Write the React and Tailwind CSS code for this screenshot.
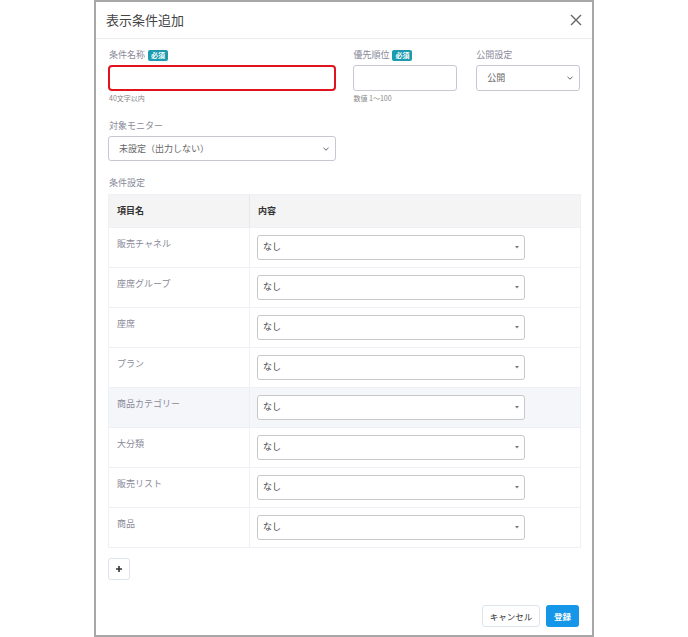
import React from "react";

const rows = [
  { name: "販売チャネル" },
  { name: "座席グループ" },
  { name: "座席" },
  { name: "プラン" },
  { name: "商品カテゴリー", hl: true },
  { name: "大分類" },
  { name: "販売リスト" },
  { name: "商品" },
];

function Badge() {
  return (
    <span className="ml-[3px] inline-flex h-[11px] items-center rounded-[2px] bg-[#1c9bb0] px-[3px] text-[7px] font-bold leading-none text-white">
      必須
    </span>
  );
}

function Chevron() {
  return (
    <svg width="8" height="6" viewBox="0 0 8 6" className="text-[#666]">
      <path d="M1.5 1.8 L4 4.2 L6.5 1.8" fill="none" stroke="currentColor" strokeWidth="1" />
    </svg>
  );
}

function App() {
  return (
    <div
      className="h-[637px] w-[688px] bg-white"
      style={{ fontFamily: '"Noto Sans CJK JP", "Noto Sans", sans-serif' }}
    >
      <div className="ml-[94px] flex h-[637px] w-[500px] flex-col border-2 border-[#a8a8a8] bg-white">
        {/* header */}
        <div className="flex h-[37px] shrink-0 items-center justify-between border-b border-[#ececec] pl-[10px] pr-[10px]">
          <span className="text-[13px] text-[#444]">表示条件追加</span>
          <svg width="12" height="12" viewBox="0 0 12 12" className="text-[#666]">
            <path d="M1 1 L11 11 M11 1 L1 11" stroke="currentColor" strokeWidth="1.4" />
          </svg>
        </div>

        {/* body */}
        <div className="flex flex-1 flex-col px-[12px] pt-[8px]">
          <div className="flex">
            <div className="w-[229px]">
              <div className="flex h-[16px] items-center pl-[1px] text-[9px] text-[#8a8a9a]">
                条件名称
                <Badge />
              </div>
              <div className="mt-[2px] h-[26px] rounded-[4px] border-2 border-[#e0141e]" />
              <div className="mt-[2px] pl-[1px] text-[7px] text-[#888]">40文字以内</div>
            </div>
            <div className="ml-[17px] w-[104px]">
              <div className="flex h-[16px] items-center text-[9px] text-[#8a8a9a]">
                優先順位
                <Badge />
              </div>
              <div className="mt-[2px] h-[26px] rounded-[3px] border border-[#c8c8d4]" />
              <div className="mt-[2px] text-[7px] text-[#888]">数値 1〜100</div>
            </div>
            <div className="ml-[19px] w-[104px]">
              <div className="flex h-[16px] items-center text-[9px] text-[#8a8a9a]">公開設定</div>
              <div className="mt-[2px] flex h-[26px] items-center justify-between rounded-[3px] border border-[#c8c8d4] pl-[10px] pr-[5px] text-[9px] text-[#666]">
                公開
                <Chevron />
              </div>
            </div>
          </div>

          <div className="mt-[15px] pl-[1px] text-[9px] text-[#8a8a9a]">対象モニター</div>
          <div className="mt-[4px] flex h-[25px] w-[228px] items-center justify-between rounded-[3px] border border-[#c8c8d4] pl-[10px] pr-[5px] text-[9px] text-[#666]">
            未設定（出力しない）
            <Chevron />
          </div>

          <div className="mt-[15px] pl-[1px] text-[9px] text-[#8a8a9a]">条件設定</div>
          <div className="mt-[4px] w-[473px] border border-[#edf0f5]">
            <div className="flex h-[32px] bg-[#f4f4f4] text-[9px] font-bold text-[#333]">
              <div className="flex w-[141px] items-center border-r border-[#e8e8e8] pl-[8px]">項目名</div>
              <div className="flex items-center pl-[8px]">内容</div>
            </div>
            {rows.map((r, i) => (
              <div
                key={i}
                className={
                  "flex h-[40px] border-t border-[#edf0f5] " + (r.hl ? "bg-[#f5f6fa]" : "bg-white")
                }
              >
                <div className="w-[141px] border-r border-[#edf0f5] pl-[8px] pt-[9px] text-[9px] text-[#8a8a9a]">
                  {r.name}
                </div>
                <div className="flex items-center pl-[7px]">
                  <div className="flex h-[25px] w-[268px] items-center justify-between rounded-[3px] border border-[#c8c8c8] bg-white pl-[5px] pr-[4px] text-[9px] text-[#444]">
                    なし
                    <svg width="6" height="4" viewBox="0 0 6 4">
                      <path d="M1 1 L5 1 L3 3.5 Z" fill="#777" />
                    </svg>
                  </div>
                </div>
              </div>
            ))}
          </div>

          <div className="mt-[10px] flex h-[22px] w-[22px] items-center justify-center rounded-[3px] border border-[#dde4ee]">
            <svg width="8" height="8" viewBox="0 0 8 8">
              <path d="M4 1 V7 M1 4 H7" stroke="#333" strokeWidth="1.6" />
            </svg>
          </div>

          <div className="mt-auto flex justify-end gap-[6px] pb-[8px] pr-[1px]">
            <div className="flex h-[22px] w-[58px] items-center justify-center rounded-[3px] border border-[#dde4ee] text-[8.5px] text-[#333]">
              キャンセル
            </div>
            <div className="flex h-[22px] w-[33px] items-center justify-center rounded-[3px] bg-[#1596e8] text-[8.5px] font-bold text-white">
              登録
            </div>
          </div>
        </div>
      </div>
    </div>
  );
}

export default App;
